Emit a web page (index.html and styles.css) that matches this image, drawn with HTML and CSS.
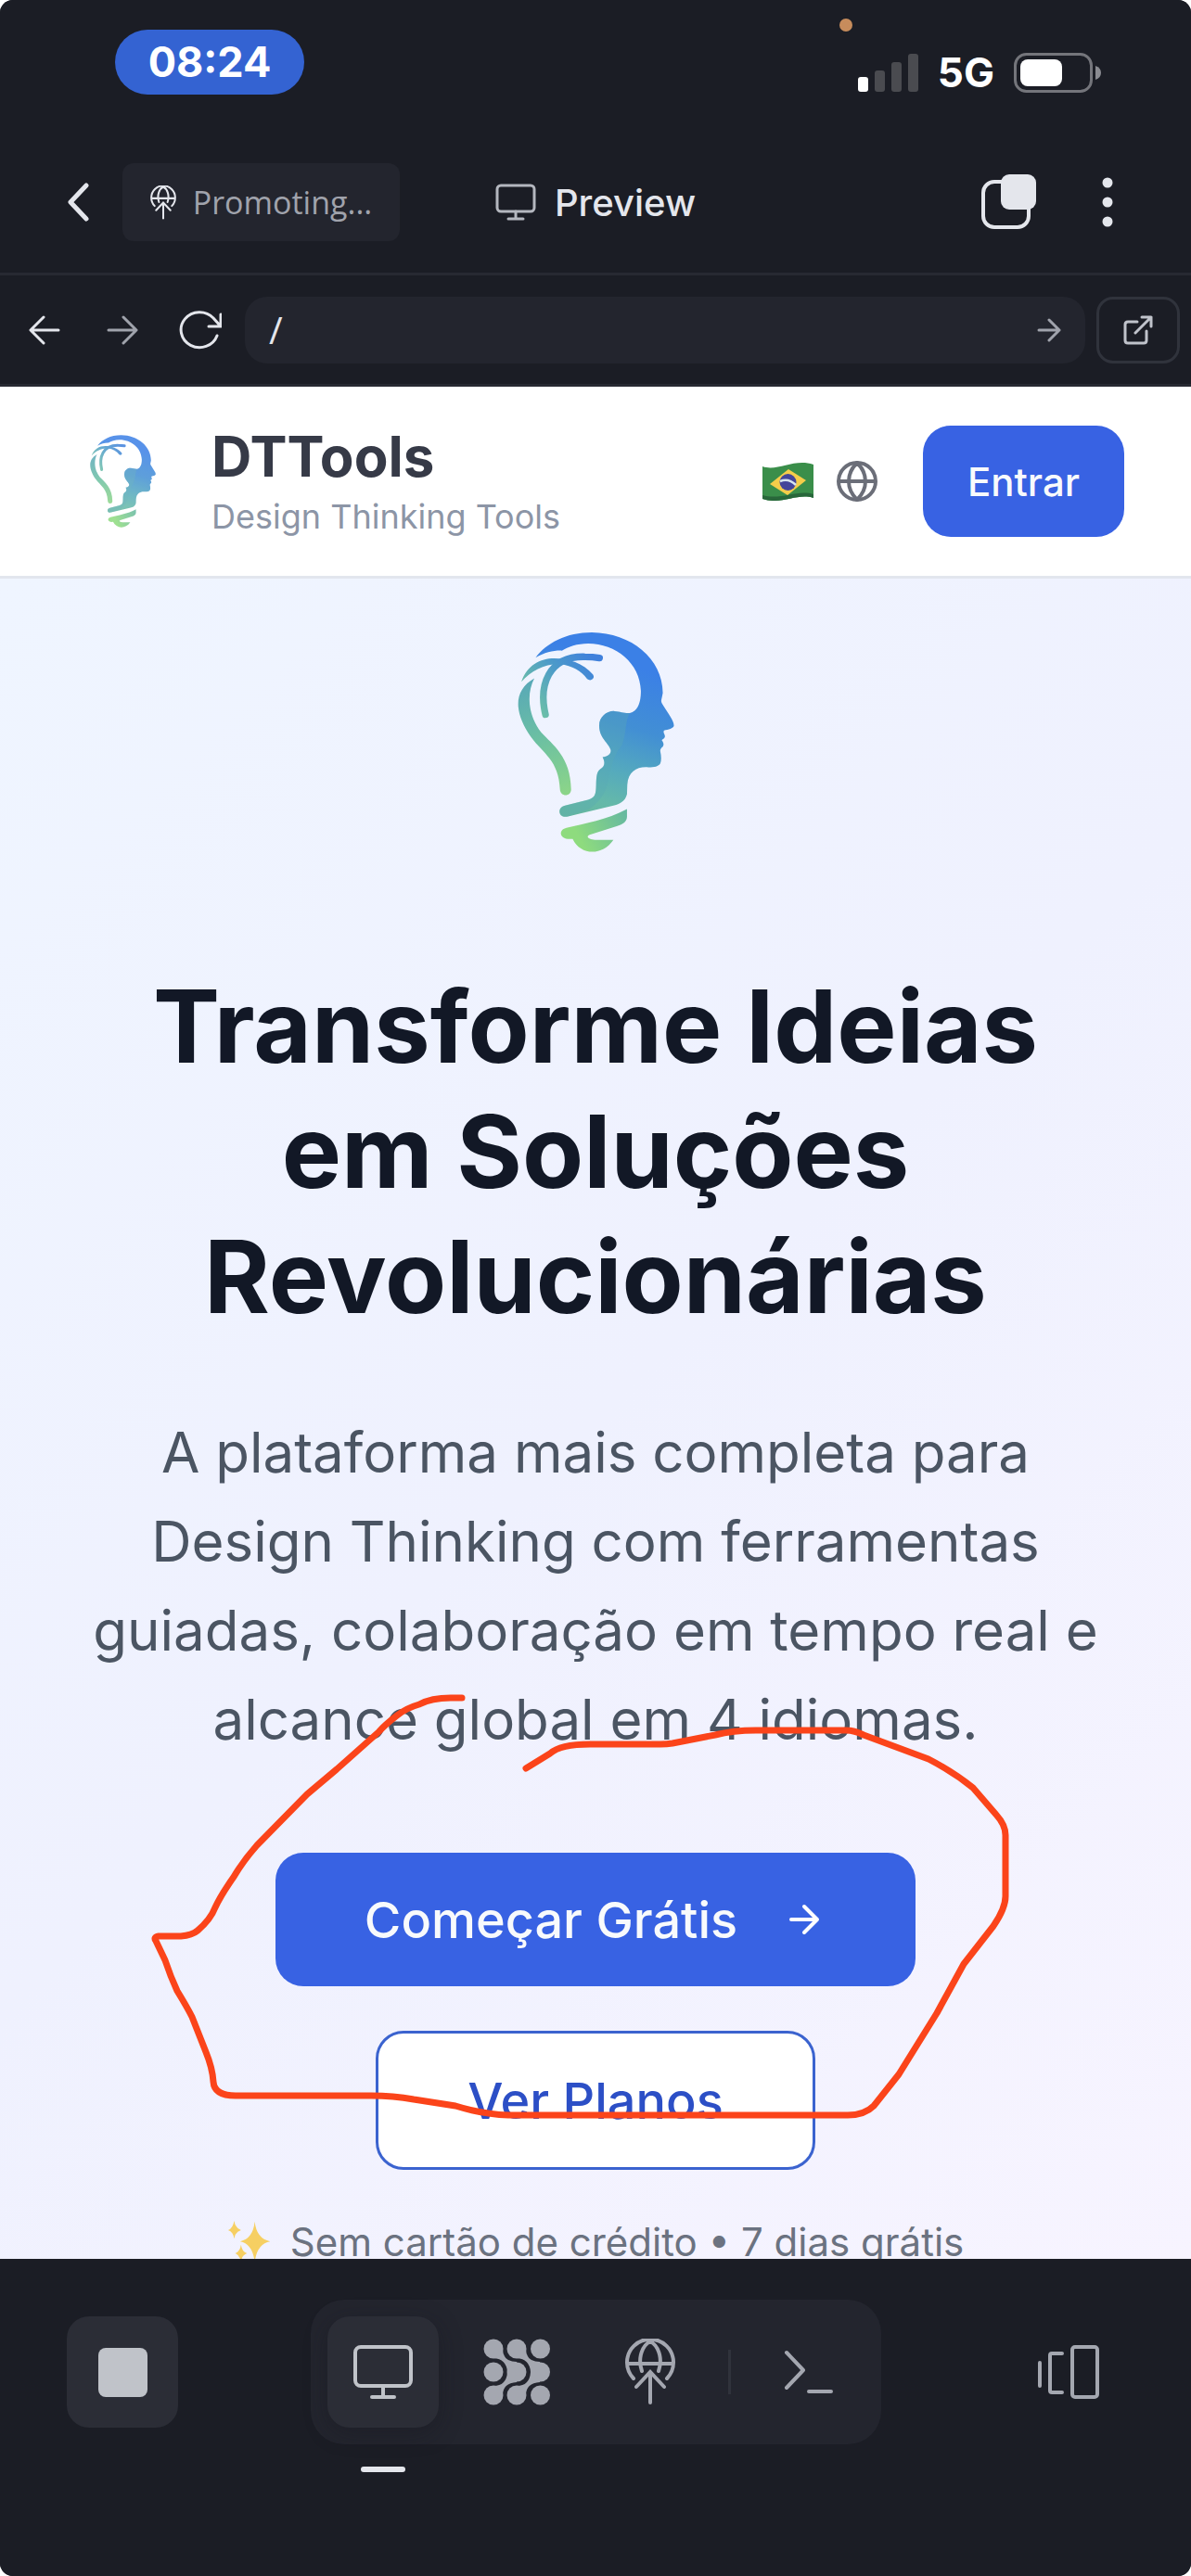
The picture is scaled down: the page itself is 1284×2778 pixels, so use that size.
FILE: index.html
```html
<!DOCTYPE html>
<html lang="pt-BR">
<head>
<meta charset="utf-8">
<meta name="viewport" content="width=device-width, initial-scale=1">
<title>DTTools</title>
<link rel="stylesheet" href="styles.css">
</head>
<body>
<svg class="defs" aria-hidden="true">
  <defs>
    <linearGradient id="head-fill" gradientUnits="userSpaceOnUse" x1="470" y1="180" x2="300" y2="700">
      <stop offset="0" stop-color="#3b80e6"/><stop offset=".35" stop-color="#428fd4"/><stop offset=".62" stop-color="#55aabd"/><stop offset=".82" stop-color="#65b9a9"/><stop offset="1" stop-color="#67b79a"/>
    </linearGradient>
    <linearGradient id="bulb-fill" gradientUnits="userSpaceOnUse" x1="120" y1="215" x2="240" y2="590">
      <stop offset="0" stop-color="#58a8b8"/><stop offset=".5" stop-color="#6cc0a2"/><stop offset="1" stop-color="#8cd588"/>
    </linearGradient>
    <linearGradient id="leaf-fill" gradientUnits="userSpaceOnUse" x1="330" y1="150" x2="120" y2="300">
      <stop offset="0" stop-color="#3f80dc"/><stop offset=".5" stop-color="#4d9cc8"/><stop offset="1" stop-color="#70c3a4"/>
    </linearGradient>
    <linearGradient id="base-fill" gradientUnits="userSpaceOnUse" x1="430" y1="650" x2="280" y2="730">
      <stop offset="0" stop-color="#66b9a0"/><stop offset="1" stop-color="#8edb7e"/>
    </linearGradient>
    <symbol id="logo" viewBox="82 66 507 712">
      <path fill="url(#head-fill)" d="M140 148C175 100 240 66 322 66C450 68 551 150 552 262C547 290 544 288 552 300C565 323 588 350 588 368C586 378 570 380 556 384C551 392 562 398 558 406C554 413 549 412 549 416C555 423 556 431 552 436C545 441 543 446 544 452C547 465 548 480 544 490C538 500 525 503 505 503C470 500 440 515 437 560L436 590C430 615 410 622 395 626L245 662C213 670 208 633 235 627L310 608C334 600 335 590 336 560C337 530 338 517 350 508C364 500 366 487 357 470C375 468 386 458 383 446C378 425 346 410 346 368C346 340 370 320 395 321C415 322 425 328 445 327C472 322 481 290 481 255C478 165 400 102 310 102C275 102 245 113 225 125C200 124 170 130 140 148Z"/>
      <path fill="#58aab4" opacity=".35" d="M357 470C375 468 386 458 383 446C378 425 346 410 346 368C346 340 370 320 395 321C415 322 425 328 445 327C430 350 435 390 420 430C395 460 385 500 375 545C368 590 340 622 310 640L245 662C213 670 208 633 235 627L310 608C334 600 335 590 336 560C337 530 338 517 350 508C364 500 366 487 357 470Z"/>
      <path fill="url(#leaf-fill)" d="M94 226C112 172 155 150 200 150C245 150 295 165 326 203C334 216 318 226 307 217C288 190 258 174 220 169C170 167 125 190 94 226Z"/>
      <path fill="none" stroke="url(#leaf-fill)" stroke-width="22" stroke-linecap="round" d="M172 332C150 240 180 142 300 145Q325 145 347 149"/>
      <path fill="url(#bulb-fill)" d="M136 215C112 260 112 330 158 390C195 430 254 470 255 575C254 599 221 599 219 575C215 480 165 460 125 405C70 325 66 255 136 215Z"/>
      <path fill="url(#base-fill)" d="M240 699C300 684 370 674 436 638V664C435 680 422 688 405 693L315 722C300 728 315 738 332 738H392C355 792 285 788 260 735C215 740 212 705 240 699Z"/>
    </symbol>
    <symbol id="globe-up" viewBox="0 0 54 72">
      <g fill="none" stroke="currentColor" stroke-width="4" stroke-linecap="round">
        <path d="M9 43A25 25 0 1 1 45 43M2 27H52M18 35C13 20 19 7 27 3C35 7 41 20 36 35M27 69V37M12 52L27 36L42 52"/>
      </g>
    </symbol>
  </defs>
</svg>
<div class="app">
  <header class="chrome">
    <div class="status">
      <span class="clock">08:24</span>
      <span class="mic-dot"></span>
      <div class="signals">
        <svg width="65" height="41" viewBox="0 0 65 41"><rect y="25" width="11" height="16" rx="3" fill="#fff"/><g fill="#4a4b50"><rect x="18" y="18" width="11" height="23" rx="3"/><rect x="36" y="9" width="11" height="32" rx="3"/><rect x="54" width="11" height="41" rx="3"/></g></svg>
        <span class="network">5G</span>
        <svg width="94" height="43" viewBox="0 0 94 43"><rect x="1.500" y="1.500" width="82" height="40" rx="12" fill="none" stroke="#74757b" stroke-width="3"/><rect x="7" y="7" width="45" height="29" rx="8" fill="#fff"/><path d="M88 14Q94 16 94 21.500T88 29Z" fill="#8a8b91"/></svg>
      </div>
    </div>
    <div class="toolbar">
      <div class="toolbar-left">
        <button class="icon-button back" aria-label="Back"><svg width="24" height="42" viewBox="0 0 24 42"><path d="M21 3L4 21L21 39" fill="none" stroke="#e4e6ec" stroke-width="5" stroke-linecap="round" stroke-linejoin="round"/></svg></button>
        <button class="chip"><svg width="28" height="37" class="chip-icon"><use href="#globe-up"/></svg>Promoting...</button>
      </div>
      <h1 class="tool-title"><svg width="44" height="40" viewBox="0 0 44 40"><g fill="none" stroke="#b4b7bf" stroke-width="3" stroke-linecap="round"><rect x="2" y="2" width="40" height="28" rx="4"/><path d="M22 30V37M14 38H30"/></g></svg>Preview</h1>
      <div class="toolbar-right">
        <button class="icon-button" aria-label="Tabs"><svg width="60" height="60" viewBox="0 0 60 60"><rect x="2" y="8" width="49" height="49" rx="12" fill="none" stroke="#e4e6ec" stroke-width="4"/><rect x="21" y="0" width="38" height="38" rx="9" fill="#e4e6ec"/></svg></button>
        <button class="icon-button" aria-label="More"><svg width="12" height="54" viewBox="0 0 12 54" fill="#e4e6ec"><circle cx="6" cy="6" r="5.500"/><circle cx="6" cy="27" r="5.500"/><circle cx="6" cy="48" r="5.500"/></svg></button>
      </div>
    </div>
    <form class="nav">
      <button type="button" class="nav-button" aria-label="Previous page"><svg width="34" height="34" viewBox="0 0 34 34"><path d="M32 17H3M16 3L2 17L16 31"/></svg></button>
      <button type="button" class="nav-button dim" aria-label="Next page"><svg width="34" height="34" viewBox="0 0 34 34"><path d="M2 17H31M18 3L32 17L18 31"/></svg></button>
      <button type="button" class="nav-button" aria-label="Reload"><svg width="46" height="42" viewBox="-1 0 46 42"><path d="M40 27A20 19 0 1 1 36 8L44 17M44 4V17H31"/></svg></button>
      <div class="address">
        <input type="text" value="/" aria-label="Address">
        <button class="go" aria-label="Go"><svg width="26" height="26" viewBox="0 0 26 26"><path d="M2 13H24M13 2L24 13L13 24"/></svg></button>
      </div>
      <button type="button" class="external" aria-label="Open in new tab"><svg width="32" height="32" viewBox="0 0 32 32"><path d="M15 7H5Q2 7 2 10V27Q2 30 5 30H22Q25 30 25 27V17M20 2H30V12M13 19L30 2"/></svg></button>
    </form>
  </header>

  <div class="site-header">
    <svg class="brand-logo" width="71" height="100" role="img" aria-label="DTTools"><use href="#logo"/></svg>
    <div class="brand">
      <strong>DTTools</strong>
      <span>Design Thinking Tools</span>
    </div>
    <button class="language" aria-label="Idioma">
      <svg width="56" height="41" viewBox="0 0 56 41"><path d="M0 4C16 10 34-5 55 2V38C38 32 20 46 0 39Z" fill="#3a8e4a"/><path d="M0 35C20 41 38 28 55 34V38C38 32 20 46 0 39Z" fill="#28673a"/><path d="M8 23L28 7L47 19L27 35Z" fill="#f5cd4a"/><circle cx="27.500" cy="21" r="9" fill="#43459a"/><path d="M19 20Q28 16 36 24" fill="none" stroke="#d6e4ef" stroke-width="2.500"/></svg>
      <svg width="44" height="44" viewBox="0 0 44 44"><g fill="none" stroke="#6b6e78" stroke-width="4"><circle cx="22" cy="22" r="20"/><path d="M2 22H42M22 2C10 14 10 30 22 42C34 30 34 14 22 2Z"/></g></svg>
    </button>
    <button class="enter">Entrar</button>
  </div>

  <main class="hero">
    <svg class="hero-logo" width="169" height="237" aria-hidden="true"><use href="#logo"/></svg>
    <h2>Transforme Ideias<br>em Soluções<br>Revolucionárias</h2>
    <p class="lead">A plataforma mais completa para<br>Design Thinking com ferramentas<br>guiadas, colaboração em tempo real e<br>alcance global em 4 idiomas.</p>
    <div class="actions">
      <button class="primary">Começar Grátis<svg width="48" height="48" viewBox="0 0 24 24"><path d="M5 12H19M12 5L19 12L12 19" fill="none" stroke="#fff" stroke-width="2" stroke-linecap="round" stroke-linejoin="round"/></svg></button>
      <button class="secondary">Ver Planos</button>
    </div>
    <p class="note"><svg width="50" height="50" viewBox="0 0 54 54" fill="#f6cf62"><path d="M32 2Q34 22 50 25Q34 28 32 50Q30 28 15 25Q30 22 32 2Z"/><path d="M8 1Q9 9 16 12Q9 14 8 22Q7 14 1 12Q7 9 8 1Z"/><path d="M16 29Q17 37 23 39Q17 41 16 49Q15 41 9 39Q15 37 16 29Z"/></svg>Sem cartão de crédito • 7 dias grátis</p>
    <svg class="markup" width="1000" height="480" viewBox="142 1820 1000 480" aria-hidden="true"><path d="M498 1831H486Q465 1831 452 1838Q438 1842 428 1850Q415 1860 408 1868L363 1908L331 1935L277 1990Q262 2007 252 2024Q238 2044 232 2057Q227 2070 213 2082Q207 2087 195 2088H171Q165 2089 168 2093L178 2114Q184 2132 191 2147Q202 2165 207 2175L222 2213Q229 2230 230 2245Q231 2260 254 2260H400Q424 2260 446 2264L491 2271Q520 2280 548 2281H914Q932 2281 942 2271L969 2237L1010 2171L1039 2118L1071 2077Q1084 2058 1084 2045V1979Q1084 1968 1074 1957L1049 1928Q1028 1911 1001 1897L931 1871Q921 1866 912 1866H815Q790 1866 771 1871L725 1880Q719 1881 712 1881H636Q604 1881 593 1891L567 1907"/></svg>
  </main>

  <footer class="dock">
    <button class="tile raised" aria-label="Stop"><span class="stop"></span></button>
    <nav class="dock-group" aria-label="Tools">
      <button class="tile raised current" aria-label="Preview"><svg width="66" height="62" viewBox="0 0 66 62"><g fill="none" stroke="currentColor" stroke-width="4" stroke-linecap="round"><rect x="3" y="4" width="60" height="42" rx="6"/><path d="M33 46V58M21 58H45"/></g></svg></button>
      <button class="tile" aria-label="Agent"><svg width="72" height="72" viewBox="0 0 72 72" fill="currentColor"><circle cx="11" cy="11" r="10.500"/><circle cx="36" cy="11" r="10.500"/><circle cx="61.500" cy="11" r="10.500"/><circle cx="11" cy="36" r="10.500"/><circle cx="36" cy="36" r="10.500"/><circle cx="61.500" cy="36" r="10.500"/><circle cx="11" cy="61" r="10.500"/><circle cx="36" cy="61" r="10.500"/><circle cx="61.500" cy="61" r="10.500"/><path d="M21 11Q21 25 36 25V47Q21 48 21 61L11 51Q25 51 26 36Q25 22 11 21Z"/><path d="M46 11Q46 25 61 25V47Q46 48 46 61L36 51Q50 51 51 36Q50 22 36 21Z"/></svg></button>
      <button class="tile" aria-label="Publish"><svg width="54" height="72"><use href="#globe-up"/></svg></button>
      <span class="divider"></span>
      <button class="tile" aria-label="Console"><svg width="54" height="48" viewBox="0 0 54 48"><path d="M3 3L21 22L3 41M27 45H51" fill="none" stroke="currentColor" stroke-width="4" stroke-linecap="round" stroke-linejoin="round"/></svg></button>
    </nav>
    <button class="tile" aria-label="Switch panel"><svg width="68" height="60" viewBox="0 0 68 60"><g fill="none" stroke="currentColor" stroke-width="4" stroke-linecap="round" stroke-linejoin="round"><rect x="38" y="3" width="27" height="54" rx="3"/><path d="M27 10H16Q14 10 14 12V50Q14 52 16 52H27M3 20V45"/></g></svg></button>
  </footer>
</div>
</body>
</html>
```
FILE: styles.css
```css
* {
  box-sizing: border-box;
}

body {
  margin: 0;
  background: #fff;
  font-family: Inter, "Liberation Sans", sans-serif;
}

button {
  display: flex;
  align-items: center;
  justify-content: center;
  margin: 0;
  padding: 0;
  border: 0;
  background: none;
  color: inherit;
  font: inherit;
}

svg {
  display: block;
  flex: none;
}

.defs {
  position: absolute;
  width: 0;
  height: 0;
}

.app {
  display: flex;
  flex-direction: column;
  height: 100vh;
  overflow: hidden;
  border-radius: 14px;
  background: #1b1d25;
}

/* Device and browser bars */

.chrome {
  flex: none;
  background: #1b1d25;
  color: #e4e6ec;
}

.status {
  position: relative;
  display: flex;
  align-items: flex-start;
  justify-content: space-between;
  height: 142px;
  padding: 32px 97px 0 124px;
}

.clock {
  width: 204px;
  border-radius: 35px;
  background: #3463d2;
  color: #fff;
  font-size: 45px;
  font-weight: 700;
  line-height: 70px;
  text-align: center;
}

.mic-dot {
  position: absolute;
  top: 20px;
  right: 365px;
  width: 14px;
  height: 14px;
  border-radius: 50%;
  background: #c78c5c;
}

.signals {
  display: flex;
  align-items: center;
  gap: 21px;
  padding-top: 22px;
}

.network {
  color: #fff;
  font-size: 44px;
  font-weight: 700;
  line-height: 48px;
}

.toolbar {
  display: grid;
  grid-template-columns: 1fr auto 1fr;
  align-items: center;
  height: 152px;
}

.toolbar-left,
.toolbar-right {
  display: flex;
  align-items: center;
}

.back {
  width: 60px;
  margin-left: 54px;
  margin-right: 18px;
}

.chip {
  gap: 18px;
  width: 299px;
  height: 84px;
  border-radius: 12px;
  background: #23252e;
  color: #a0a3ac;
  font-family: "Open Sans", "Noto Sans", sans-serif;
  font-size: 34px;
  line-height: 44px;
}

.chip-icon {
  color: #e4e6ec;
}

.tool-title {
  display: flex;
  align-items: center;
  gap: 20px;
  margin: 0;
  font-size: 40px;
  font-weight: 500;
}

.toolbar-right {
  justify-content: flex-end;
  gap: 70px;
  padding-right: 84px;
}

.nav {
  display: flex;
  align-items: center;
  height: 123px;
  margin: 0;
  padding: 0 12px 0 6px;
  border-top: 3px solid #272932;
  border-bottom: 3px solid #272932;
}

.nav svg {
  fill: none;
  stroke: currentColor;
  stroke-width: 3px;
  stroke-linecap: round;
  stroke-linejoin: round;
}

.nav-button {
  flex: none;
  width: 84px;
  height: 72px;
}

.dim,
.go {
  color: #a0a3ac;
}

.address {
  display: flex;
  flex: 1;
  align-items: center;
  height: 72px;
  margin: 0 12px 0 6px;
  padding: 0 26px;
  border-radius: 24px;
  background: #23252e;
}

.address input {
  flex: 1;
  min-width: 0;
  padding: 0;
  border: 0;
  outline: 0;
  background: none;
  color: #e4e6ec;
  font-family: "Open Sans", "Noto Sans", sans-serif;
  font-size: 40px;
}

.external {
  width: 90px;
  height: 72px;
  border: 3px solid #30333c;
  border-radius: 18px;
  color: #c0c3cb;
}

/* Site header */

.site-header {
  display: flex;
  flex: none;
  align-items: center;
  height: 207px;
  padding: 0 72px 0 97px;
  border-bottom: 3px solid #e2e6ee;
  background: #fff;
}

.brand-logo {
  opacity: .85;
}

.brand {
  display: flex;
  flex: 1;
  flex-direction: column;
  margin-left: 60px;
}

.brand strong {
  color: #363a47;
  font-size: 60px;
  font-weight: 700;
  line-height: 76px;
}

.brand span {
  color: #8c95a6;
  font-size: 36px;
  line-height: 54px;
}

.language {
  gap: 24px;
}

.enter {
  width: 217px;
  height: 120px;
  margin-left: 49px;
  border-radius: 30px;
  background: #3862e3;
  color: #f8fafc;
  font-size: 42px;
  font-weight: 500;
}

/* Hero */

.hero {
  position: relative;
  display: flex;
  flex: 1 1 0;
  flex-direction: column;
  align-items: center;
  min-height: 0;
  padding-top: 58px;
  overflow: hidden;
  background: linear-gradient(135deg, #eff5ff, #eff1fe 50%, #f7f4ff);
  text-align: center;
  white-space: nowrap;
}

.hero h2 {
  margin: 120px 0 0;
  color: #121826;
  font-size: 108px;
  font-weight: 700;
  line-height: 135px;
}

.lead {
  margin: 74px 0 0;
  color: #4b5563;
  font-size: 60px;
  line-height: 96px;
}

.actions {
  display: flex;
  flex-direction: column;
  align-items: center;
  gap: 48px;
  margin-top: 96px;
}

.primary,
.secondary {
  border-radius: 30px;
  font-size: 54px;
  font-weight: 500;
}

.primary {
  gap: 48px;
  height: 144px;
  padding: 0 96px;
  background: #3862e3;
  color: #f8fafc;
}

.secondary {
  height: 150px;
  padding: 0 96px;
  border: 3px solid #3b63cf;
  background: #fff;
  color: #2c4fc6;
}

.note {
  display: flex;
  align-items: flex-start;
  gap: 18px;
  margin: 48px 0 0;
  color: #6b7280;
  font-size: 42px;
  line-height: 60px;
}

.note svg {
  margin-top: 6px;
}

.markup {
  position: absolute;
  top: 1196px;
  left: 50%;
  margin-left: -500px;
  overflow: visible;
  fill: none;
  stroke: #fb441a;
  stroke-width: 7px;
  stroke-linecap: round;
  stroke-linejoin: round;
}

/* Bottom dock */

.dock {
  display: grid;
  grid-template-columns: 1fr auto 1fr;
  flex: none;
  align-items: start;
  height: 342px;
  padding: 44px 72px 0;
  background: #1b1d25;
  color: #a4a7b0;
}

.tile {
  position: relative;
  width: 120px;
  height: 120px;
  border-radius: 24px;
}

.dock > .tile {
  margin-top: 18px;
}

.dock > .tile:last-child {
  justify-self: end;
}

.raised {
  background: #2b2d36;
  color: #c0c3c9;
}

.stop {
  width: 53px;
  height: 53px;
  border-radius: 8px;
  background: #c0c3c9;
}

.dock-group {
  display: flex;
  align-items: center;
  gap: 24px;
  padding: 18px;
  border-radius: 36px;
  background: #23252e;
}

.current {
  box-shadow: 0 6px 24px rgba(20, 20, 28, .35);
}

.current::after {
  content: "";
  position: absolute;
  top: 162px;
  left: 36px;
  width: 48px;
  height: 6px;
  border-radius: 3px;
  background: #e4e6ec;
}

.divider {
  width: 3px;
  height: 48px;
  background: #30333c;
}
```
